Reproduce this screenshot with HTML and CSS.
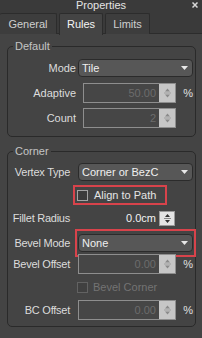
FILE: index.html
```html
<!DOCTYPE html>
<html>
<head>
<meta charset="utf-8">
<link rel="stylesheet" href="styles.css">
</head>
<body>
<div class="titlebar">
  <span class="title">Properties</span>
  <svg class="close" width="6" height="6" viewBox="0 0 6 6"><path d="M0.5 0.5L5.5 5.5M5.5 0.5L0.5 5.5" stroke="#d8d8d8" stroke-width="1.5"/></svg>
</div>
<div class="tabs">
  <div class="tab tab-general">General</div>
  <div class="tab tab-rules active">Rules</div>
  <div class="tab tab-limits">Limits</div>
</div>
<div class="panel">
  <fieldset class="group group-default">
    <legend>Default</legend>
    <div class="rows">
      <div class="row">
        <span class="lab">Mode</span>
        <div class="drop"><span>Tile</span><svg class="dd" width="7" height="4" viewBox="0 0 7 4"><path d="M0 0H7L3.5 4Z" fill="#e8e8e8"/></svg></div>
      </div>
      <div class="row">
        <span class="lab">Adaptive</span>
        <div class="spin dis inset"><span class="val">50.00</span><span class="arrows"><svg width="7" height="14" viewBox="0 0 7 14"><path d="M1 5.5H6L3.5 2.5Z M1 8.5H6L3.5 11.5Z" fill="#8a8a8a"/><path d="M0 7H7" stroke="#9e9e9e" stroke-width="1"/></svg></span></div>
        <span class="pct">%</span>
      </div>
      <div class="row">
        <span class="lab">Count</span>
        <div class="spin dis inset"><span class="val">2</span><span class="arrows"><svg width="7" height="14" viewBox="0 0 7 14"><path d="M1 5.5H6L3.5 2.5Z M1 8.5H6L3.5 11.5Z" fill="#8a8a8a"/><path d="M0 7H7" stroke="#9e9e9e" stroke-width="1"/></svg></span></div>
      </div>
    </div>
  </fieldset>
  <fieldset class="group group-corner">
    <legend>Corner</legend>
    <div class="rows">
      <div class="row">
        <span class="lab">Vertex Type</span>
        <div class="drop"><span>Corner or BezC</span><svg class="dd" width="7" height="4" viewBox="0 0 7 4"><path d="M0 0H7L3.5 4Z" fill="#e8e8e8"/></svg></div>
      </div>
      <div class="row">
        <div class="check hl"><span class="box"></span><span>Align to Path</span></div>
      </div>
      <div class="row">
        <span class="lab">Fillet Radius</span>
        <div class="spin on"><span class="val">0.0cm</span><span class="arrows"><svg width="7" height="13" viewBox="0 0 7 13"><path d="M1 5H6L3.5 2Z M1 8H6L3.5 11Z" fill="#333"/><path d="M0 6.5H7" stroke="#888" stroke-width="1"/></svg></span></div>
      </div>
      <div class="row">
        <span class="lab">Bevel Mode</span>
        <div class="hl-box">
          <div class="drop"><span>None</span><svg class="dd" width="7" height="4" viewBox="0 0 7 4"><path d="M0 0H7L3.5 4Z" fill="#e8e8e8"/></svg></div>
        </div>
      </div>
      <div class="row">
        <span class="lab">Bevel Offset</span>
        <div class="spin dis"><span class="val">0.00</span><span class="arrows"><svg width="7" height="14" viewBox="0 0 7 14"><path d="M1 5.5H6L3.5 2.5Z M1 8.5H6L3.5 11.5Z" fill="#8a8a8a"/><path d="M0 7H7" stroke="#9e9e9e" stroke-width="1"/></svg></span></div>
        <span class="pct">%</span>
      </div>
      <div class="row">
        <div class="check off"><span class="box"></span><span>Bevel Corner</span></div>
      </div>
      <div class="row">
        <span class="lab">BC Offset</span>
        <div class="spin dis"><span class="val">0.00</span><span class="arrows"><svg width="7" height="14" viewBox="0 0 7 14"><path d="M1 5.5H6L3.5 2.5Z M1 8.5H6L3.5 11.5Z" fill="#8a8a8a"/><path d="M0 7H7" stroke="#9e9e9e" stroke-width="1"/></svg></span></div>
        <span class="pct">%</span>
      </div>
    </div>
  </fieldset>
</div>
</body>
</html>
```

FILE: styles.css
```css
* { box-sizing: border-box; }
html, body { margin: 0; padding: 0; }
body {
  width: 202px;
  height: 338px;
  overflow: hidden;
  background: #444444;
  font-family: "Liberation Sans", Arial, sans-serif;
  font-size: 11px;
  color: #dcdcdc;
}
.titlebar {
  height: 12px;
  background: #3a3a3a;
  display: grid;
  grid-template-columns: 1fr auto 1fr;
  align-items: start;
}
.title {
  grid-column: 2;
  line-height: 11px;
  color: #e4e4e4;
}
.close {
  grid-column: 3;
  justify-self: end;
  margin: 2px 4px 0 0;
}
.tabs {
  height: 22px;
  display: flex;
  gap: 2px;
  padding-top: 1px;
  background: #3a3a3a;
  border-bottom: 1px solid #2c2c2c;
}
.tab {
  height: 21px;
  line-height: 20px;
  text-align: center;
  background: #3d3d3d;
  border: 1px solid #2c2c2c;
  border-bottom: none;
  border-radius: 2px 2px 0 0;
  color: #cfcfcf;
}
.tab-general { width: 57px; border-left: none; }
.tab-rules { width: 44px; }
.tab-limits { width: 45px; }
.tab.active {
  background: #444444;
  color: #f4f4f4;
  height: 22px;
  margin-bottom: -1px;
}
.panel {
  padding: 6px 6px 0 7px;
}
.group {
  margin: 0;
  min-width: 0;
  border: 1px solid #2a2a2a;
  border-radius: 5px;
  padding: 5px 2px 8px 0;
}
.group legend {
  margin-left: 5px;
  padding: 0 2px;
  line-height: 13px;
  color: #c4c4c4;
}
.group-corner {
  margin-top: 8px;
  padding: 4px 2px 6px 0;
}
.rows {
  display: flex;
  flex-direction: column;
  gap: 5px;
}
.group-corner .rows { gap: 3px; }
.row {
  display: grid;
  grid-template-columns: 68px 98px 15px;
  column-gap: 2px;
  height: 20px;
  align-items: center;
}
.lab {
  text-align: right;
  white-space: nowrap;
  color: #dcdcdc;
}
.group-corner .lab { padding-right: 6px; letter-spacing: -0.25px; }
.drop {
  grid-column: 2 / 4;
  height: 18px;
  display: flex;
  align-items: center;
  justify-content: space-between;
  padding: 0 4px 0 3px;
  background: #575757;
  border: 1px solid #2b2b2b;
  border-radius: 4px;
  color: #f0f0f0;
}
.dd { flex: none; }
.hl-box {
  grid-column: 2 / 4;
  height: 24px;
  margin: 0 -1px;
  padding: 3px 1px;
  outline: 2px solid #d8434b;
}
.spin {
  grid-column: 2;
  height: 20px;
  display: flex;
  align-items: stretch;
}
.spin.inset { margin-left: 5px; }
.val {
  flex: 1;
  text-align: right;
  line-height: 18px;
  padding-right: 3px;
}
.spin.dis {
  border: 1px solid #8e8e8e;
  background: #464646;
}
.spin.dis .val { color: #6c6c6c; }
.spin.dis .arrows {
  width: 16px;
  background: #c6c6c6;
  display: flex;
  align-items: center;
  justify-content: center;
}
.spin.on .val {
  color: #f2f2f2;
  line-height: 20px;
  padding-right: 3px;
}
.spin.on .arrows {
  width: 16px;
  height: 15px;
  align-self: center;
  background: #e4e4e4;
  border: 1px solid #9a9a9a;
  display: flex;
  align-items: center;
  justify-content: center;
  margin-right: 1px;
}
.pct {
  grid-column: 3;
  text-align: right;
  color: #e0e0e0;
}
.check {
  grid-column: 2 / 4;
  justify-self: start;
  display: flex;
  align-items: center;
  gap: 6px;
  height: 16px;
  padding-left: 2px;
  margin-left: -3px;
  color: #e4e4e4;
}
.check .box {
  width: 11px;
  height: 11px;
  border: 1px solid #a4a4a4;
  background: #3c3c3c;
}
.check.hl {
  width: 90px;
  outline: 2px solid #d8434b;
  outline-offset: 0;
}
.check.off { color: #737373; gap: 5px; }
.check.off .box { border-color: #626262; background: #404040; }
```
